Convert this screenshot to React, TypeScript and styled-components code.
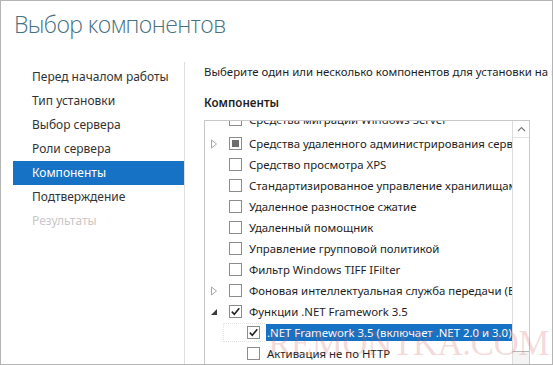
import React from "react";
import styled, { createGlobalStyle } from "styled-components";

const Global = createGlobalStyle`
  html, body { margin: 0; padding: 0; width: 553px; height: 365px; overflow: hidden; background: #fff; }
  * { box-sizing: border-box; }
`;

const Window = styled.div`
  position: relative;
  width: 553px;
  height: 365px;
  border: 1px solid #b4b4b4;
  background: #fff;
  overflow: hidden;
  font-family: "Segoe UI", "Noto Sans", "Open Sans", sans-serif;
  color: #1e1e1e;
  display: flex;
  flex-direction: column;
`;

const Title = styled.h1`
  margin: 0;
  padding: 6px 0 0 13px;
  height: 61px;
  font-family: "Open Sans", "Noto Sans", sans-serif;
  font-weight: 300;
  font-size: 23px;
  letter-spacing: -0.6px;
  line-height: 34px;
  color: #47717f;
`;

const Body = styled.div`
  flex: 1;
  display: flex;
  min-height: 0;
`;

const Nav = styled.nav`
  width: 184px;
  flex: none;
  border-right: 1px solid #dedede;
  padding: 3px 0 0 12px;
  display: flex;
  flex-direction: column;
`;

const NavItem = styled.div<{ $active?: boolean; $disabled?: boolean }>`
  height: 24px;
  line-height: 24px;
  padding-left: 19px;
  font-size: 12px;
  white-space: nowrap;
  color: ${(p) => (p.$active ? "#ffffff" : p.$disabled ? "#c8c8c8" : "#333333")};
  background: ${(p) => (p.$active ? "#1672c4" : "transparent")};
`;

const Content = styled.div`
  flex: 1;
  padding: 2px 0 0 19px;
  display: flex;
  flex-direction: column;
  min-width: 0;
`;

const Intro = styled.div`
  font-size: 11.4px;
  line-height: 16px;
  white-space: nowrap;
  overflow: hidden;
  color: #1e1e1e;
`;

const SectionLabel = styled.div`
  margin-top: 15px;
  font-size: 11.6px;
  font-weight: 600;
  line-height: 16px;
  color: #1e1e1e;
`;

const ListBox = styled.div`
  margin-top: 9px;
  width: 326px;
  flex: 1;
  border: 1px solid #c8c8c8;
  border-bottom: none;
  display: flex;
  overflow: hidden;
`;

const Rows = styled.div`
  flex: 1;
  min-width: 0;
  margin-top: -12px;
  display: flex;
  flex-direction: column;
  overflow: hidden;
`;

const Row = styled.div<{ $level?: number; $extra?: number }>`
  position: relative;
  height: 21px;
  flex: none;
  margin-bottom: ${(p) => p.$extra ?? 0}px;
  display: flex;
  align-items: center;
  padding-left: ${(p) => (p.$level ? 22 : 4)}px;
  white-space: nowrap;
  font-size: 11.4px;
`;

const Expander = styled.span`
  width: 20px;
  flex: none;
  display: flex;
  align-items: center;
  justify-content: flex-start;
  padding-left: 1px;
`;

const Box = styled.span`
  width: 13px;
  height: 13px;
  border: 1px solid #8c8c8c;
  background: #fff;
  display: flex;
  align-items: center;
  justify-content: center;
  margin-right: 6px;
  flex: none;
`;

const TriFill = styled.span`
  width: 7px;
  height: 7px;
  background: #6e6e6e;
`;

const Label = styled.span<{ $selected?: boolean }>`
  flex: none;
  padding: 0 1px;
  line-height: 17px;
  color: ${(p) => (p.$selected ? "#fff" : "#1e1e1e")};
  background: ${(p) => (p.$selected ? "#1672c4" : "transparent")};
`;

const Focus = styled.span`
  position: absolute;
  left: 18px;
  top: 1px;
  width: 42px;
  height: 19px;
  border: 1px dotted #e2e2e2;
  border-right: none;
  pointer-events: none;
`;

const Scrollbar = styled.div`
  width: 17px;
  border-left: 1px solid #dcdcdc;
  display: flex;
  flex-direction: column;
  justify-content: space-between;
  flex: none;
`;

const ScrollButton = styled.div`
  height: 17px;
  display: flex;
  align-items: center;
  justify-content: center;
  border-bottom: 1px solid #e4e4e4;
`;

const ScrollThumb = styled.div`
  height: 17px;
  margin-bottom: -4px;
  border: 1px solid #b8b8b8;
  border-left: none;
  border-right: none;
  background: #f4f4f4;
`;

const Watermark = styled.div`
  position: absolute;
  left: 267px;
  top: 323px;
  font-family: "Liberation Serif", serif;
  font-size: 35px;
  letter-spacing: -0.5px;
  line-height: 40px;
  color: rgba(205, 90, 90, 0.22);
  pointer-events: none;
  white-space: nowrap;
`;

const Collapsed = () => (
  <svg width="8" height="10" viewBox="0 0 8 10">
    <path d="M1.5 1 L6.5 5 L1.5 9 Z" fill="none" stroke="#a6a6a6" strokeWidth="1" />
  </svg>
);

const Expanded = () => (
  <svg width="8" height="8" viewBox="0 0 8 8">
    <path d="M7 1 L7 7 L1 7 Z" fill="#3a3a3a" />
  </svg>
);

const Check = () => (
  <svg width="11" height="11" viewBox="0 0 11 11">
    <path d="M1.8 5.6 L4.3 8.2 L9.3 2.2" fill="none" stroke="#222" strokeWidth="1.6" />
  </svg>
);

const Up = () => (
  <svg width="9" height="6" viewBox="0 0 9 6">
    <path d="M1 5 L4.5 1.5 L8 5" fill="none" stroke="#777" strokeWidth="1.1" />
  </svg>
);

type Item = {
  text: string;
  level?: number;
  expander?: "collapsed" | "expanded";
  state?: "none" | "tri" | "checked";
  selected?: boolean;
  extra?: number;
};

const items: Item[] = [
  { text: "Средства миграции Windows Server", extra: 3 },
  { text: "Средства удаленного администрирования сервера", expander: "collapsed", state: "tri" },
  { text: "Средство просмотра XPS" },
  { text: "Стандартизированное управление хранилищами" },
  { text: "Удаленное разностное сжатие" },
  { text: "Удаленный помощник" },
  { text: "Управление групповой политикой" },
  { text: "Фильтр Windows TIFF IFilter" },
  { text: "Фоновая интеллектуальная служба передачи (BITS)", expander: "collapsed" },
  { text: "Функции .NET Framework 3.5", expander: "expanded", state: "checked" },
  { text: ".NET Framework 3.5 (включает .NET 2.0 и 3.0)", level: 1, state: "checked", selected: true },
  { text: "Активация не по HTTP", level: 1 },
];

const nav = [
  "Перед началом работы",
  "Тип установки",
  "Выбор сервера",
  "Роли сервера",
  "Компоненты",
  "Подтверждение",
  "Результаты",
];

export default function App() {
  return (
    <>
      <Global />
      <Window>
        <Title>Выбор компонентов</Title>
        <Body>
          <Nav>
            {nav.map((n, i) => (
              <NavItem key={n} $active={i === 4} $disabled={i === 6}>
                {n}
              </NavItem>
            ))}
          </Nav>
          <Content>
            <Intro>Выберите один или несколько компонентов для установки на выбранном сервере.</Intro>
            <SectionLabel>Компоненты</SectionLabel>
            <ListBox>
              <Rows>
                {items.map((it) => (
                  <Row key={it.text} $level={it.level} $extra={it.extra}>
                    {it.selected && <Focus />}
                    <Expander>
                      {it.expander === "collapsed" && <Collapsed />}
                      {it.expander === "expanded" && <Expanded />}
                    </Expander>
                    <Box>
                      {it.state === "tri" && <TriFill />}
                      {it.state === "checked" && <Check />}
                    </Box>
                    <Label $selected={it.selected}>{it.text}</Label>
                  </Row>
                ))}
              </Rows>
              <Scrollbar>
                <ScrollButton>
                  <Up />
                </ScrollButton>
                <ScrollThumb />
              </Scrollbar>
            </ListBox>
          </Content>
        </Body>
        <Watermark>REMONTKA.COM</Watermark>
      </Window>
    </>
  );
}
